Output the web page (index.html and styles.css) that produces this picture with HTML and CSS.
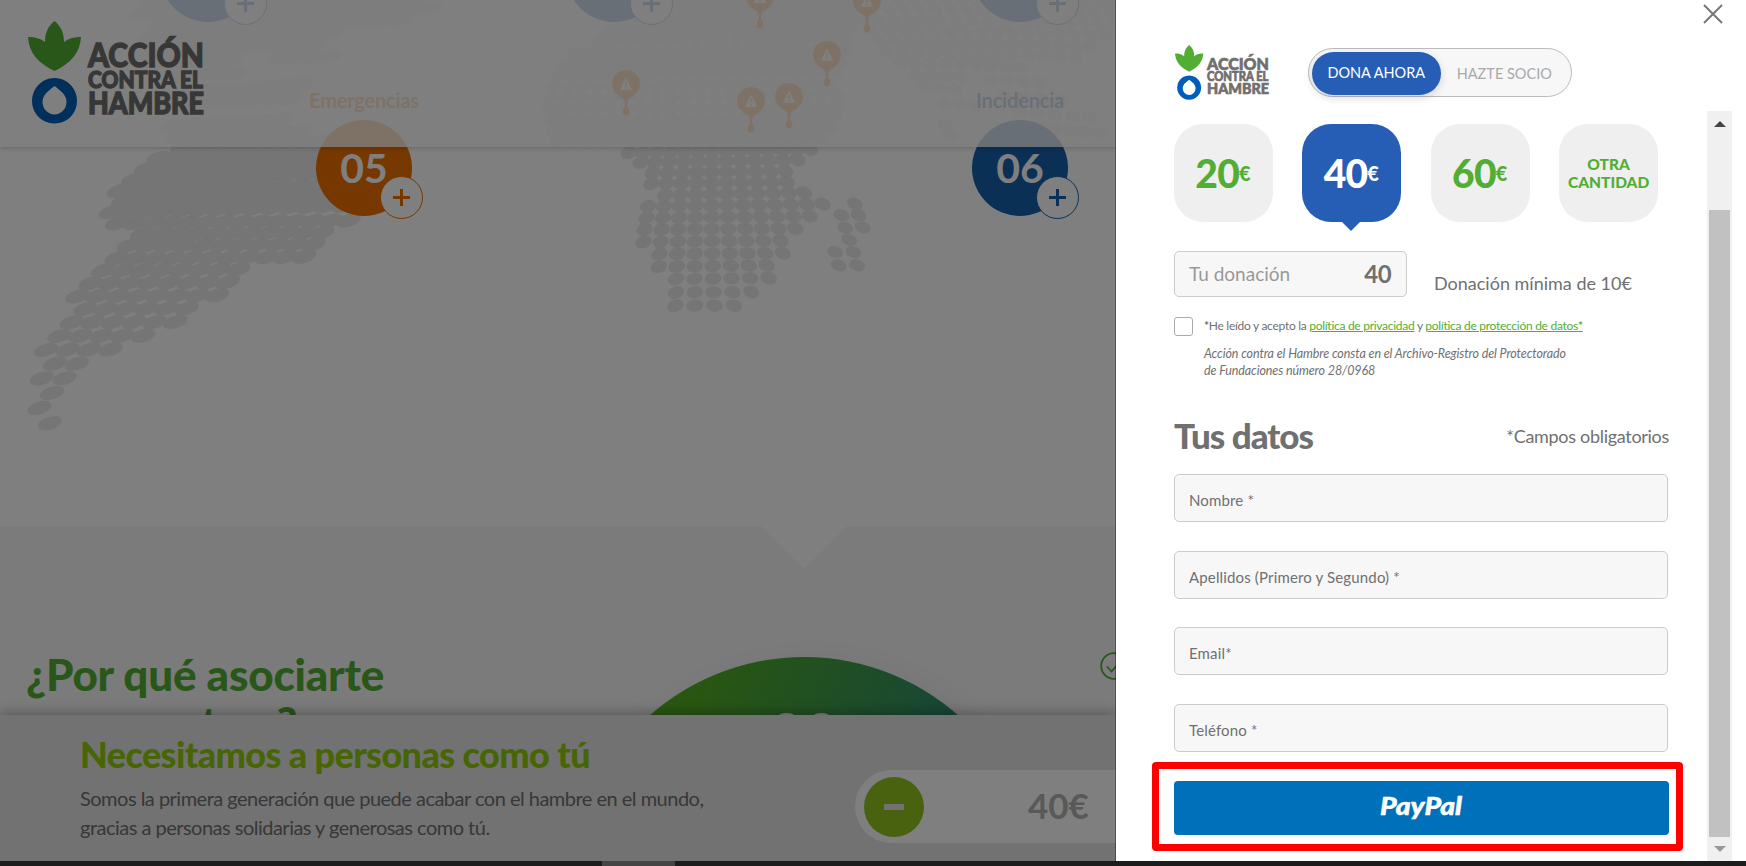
FILE: index.html
```html
<!DOCTYPE html>
<html lang="es">
<head>
<meta charset="utf-8">
<title>Acción contra el Hambre</title>
<link rel="stylesheet" href="styles.css">
</head>
<body>
<svg class="defs" width="0" height="0" aria-hidden="true">
  <symbol id="logo" viewBox="0 0 176 103" overflow="visible">
    <path fill="#52ae32" d="M26.500 50C10 42 1 32 0 16C6 16 12 17 17 21C17 12 20 5 26.500 0C33 5 36 12 36 21C41 17 47 16 53 16C52 32 43 42 26.500 50Z"/>
    <path fill="#005eb8" fill-rule="evenodd" d="M26.500 57a22.500 22.800 0 1 0 .01 0ZM26.500 65C33 70 38.500 74 38.500 81a12 12.500 0 0 1-24 0C14.500 74 20 70 26.500 65Z"/>
    <g class="logo-text">
      <text x="60" y="46" font-size="32" textLength="116" lengthAdjust="spacingAndGlyphs">ACCIÓN</text>
      <text x="60" y="66.500" font-size="23" textLength="115" lengthAdjust="spacingAndGlyphs">CONTRA EL</text>
      <text x="60" y="92.500" font-size="29.500" textLength="116" lengthAdjust="spacingAndGlyphs">HAMBRE</text>
    </g>
  </symbol>
  <symbol id="pin" viewBox="0 0 28 46">
    <path fill="#ef7d00" d="M14 0a14 14 0 0 1 14 14C28 21 22 26 17 28.500C15.500 30 15 33 15 36C16.500 38 17.500 40 17.500 42a3.500 3.500 0 0 1-7 0C10.500 40 11.500 38 13 36C13 33 12.500 30 11 28.500C6 26 0 21 0 14A14 14 0 0 1 14 0Z"/>
    <path fill="#fff" stroke="#fff" stroke-width="1.500" stroke-linejoin="round" d="M14 9l5 10h-10Z"/>
    <path stroke="#ef7d00" stroke-width="1.600" d="M14 11.500v4.500M14 17v1.400"/>
  </symbol>
</svg>

<main class="stage">
  <div class="page">
    <section class="map">
      <svg class="dots" id="dots" width="1116" height="526"></svg>
      <svg class="pin" style="left:612px;top:70px"><use href="#pin"/></svg>
      <svg class="pin" style="left:737px;top:87px"><use href="#pin"/></svg>
      <svg class="pin" style="left:775px;top:83px"><use href="#pin"/></svg>
      <svg class="pin" style="left:813px;top:41px"><use href="#pin"/></svg>
      <svg class="pin" style="left:746px;top:-17px"><use href="#pin"/></svg>
      <svg class="pin" style="left:853px;top:-13px"><use href="#pin"/></svg>
      <div class="spot" style="left:160px;top:-74px"><i class="plus"></i></div>
      <div class="spot" style="left:566px;top:-74px"><i class="plus"></i></div>
      <div class="spot" style="left:972px;top:-74px"><i class="plus"></i></div>
      <div class="spot orange" style="left:316px;top:120px"><span class="label">Emergencias</span>05<i class="plus"></i></div>
      <div class="spot" style="left:972px;top:120px"><span class="label">Incidencia</span>06<i class="plus"></i></div>
    </section>
    <section class="why">
      <svg class="notch" width="86" height="43"><path d="M0 0h86L43 43Z" fill="#fff"/></svg>
      <h2 class="why-title">¿Por qué asociarte<br>con nosotros?</h2>
      <div class="ball">00</div>
      <svg class="check" width="28" height="28" viewBox="0 0 28 28" fill="none" stroke="#52ae32" stroke-width="1.800"><circle cx="14" cy="14" r="12.800"/><path d="M7 14.500l4.500 5L20 10"/></svg>
    </section>
    <header class="topbar"><svg class="logo-big"><use href="#logo"/></svg></header>
    <aside class="cta">
      <div class="cta-copy">
        <h3 class="cta-title">Necesitamos a personas como tú</h3>
        <p class="cta-text">Somos la primera generación que puede acabar con el hambre en el mundo,<br>gracias a personas solidarias y generosas como tú.</p>
      </div>
      <div class="stepper"><span class="minus"></span><span class="stepper-value">40€</span></div>
    </aside>
  </div>

  <div class="panel">
    <svg class="close" width="20" height="20" viewBox="0 0 20 20"><path d="M1 1l18 18M19 1L1 19" stroke="#777" stroke-width="2"/></svg>
    <div class="panel-head">
      <svg class="logo-small"><use href="#logo"/></svg>
      <div class="toggle"><span class="on">DONA AHORA</span><span class="off">HAZTE SOCIO</span></div>
    </div>
    <div class="panel-body">
      <form class="form">
        <div class="amounts">
          <div class="amount">20<small>€</small></div>
          <div class="amount selected">40<small>€</small></div>
          <div class="amount">60<small>€</small></div>
          <div class="amount other">OTRA<br>CANTIDAD</div>
        </div>
        <div class="donation">
          <div class="donation-input"><span>Tu donación</span><b>40</b></div>
          <span class="minimum">Donación mínima de 10€</span>
        </div>
        <div class="consent">
          <span class="box"></span>
          <span class="consent-text"><b>*</b>He leído y acepto la <a>política de privacidad</a> y <a>política de protección de datos<b>*</b></a></span>
        </div>
        <p class="note">Acción contra el Hambre consta en el Archivo-Registro del Protectorado<br>de Fundaciones número 28/0968</p>
        <div class="data-head"><h1 class="data-title">Tus datos</h1><span class="required">*Campos obligatorios</span></div>
        <div class="fields">
          <div class="field">Nombre *</div>
          <div class="field">Apellidos (Primero y Segundo) *</div>
          <div class="field">Email*</div>
          <div class="field">Teléfono *</div>
        </div>
        <div class="paypal">
          <svg width="90" height="34"><text class="paypal-text" x="3" y="24" textLength="82" lengthAdjust="spacingAndGlyphs">PayPal</text></svg>
          <div class="highlight"></div>
        </div>
      </form>
      <div class="scrollbar">
        <svg class="up" width="12" height="6"><path d="M6 0l6 6H0Z" fill="#444"/></svg>
        <div class="thumb"></div>
        <svg class="down" width="12" height="6"><path d="M0 0h12L6 6Z" fill="#999"/></svg>
      </div>
    </div>
  </div>
</main>
<footer class="taskbar"><div class="task"></div></footer>
<script src="map.js"></script>
</body>
</html>
```

FILE: styles.css
```css
* { box-sizing: border-box; }
body { margin: 0; width: 1746px; height: 866px; overflow: hidden; background: #1c1c1c; font-family: Lato, "Liberation Sans", sans-serif; color: #707070; }
h1, h2, h3, p { margin: 0; }
.defs { position: absolute; }
.stage { display: flex; height: 861px; background: #fff; }
.logo-text { font-family: Lato, sans-serif; font-weight: 900; fill: #706f6f; stroke: #706f6f; stroke-width: 1.300; }

/* Dimmed page */
.page { position: relative; width: 1116px; height: 861px; overflow: hidden; background: #fff; flex: none; }
.page::after { content: ""; position: absolute; inset: 0; background: rgba(0, 0, 0, .5); border-right: 1px solid rgba(0, 0, 0, .35); }
.map { position: relative; height: 526px; }
.dots { position: absolute; left: 0; top: 0; }
.pin { position: absolute; width: 28px; height: 46px; }
.spot { position: absolute; width: 96px; height: 96px; border-radius: 50%; background: #1760ab; color: #fff; font-size: 41px; font-weight: 700; line-height: 95px; text-align: center; --c: #1760ab; }
.spot.orange { background: #ef7000; --c: #ef7000; }
.label { position: absolute; left: -50px; right: -50px; top: -32px; font-size: 20px; line-height: 24px; letter-spacing: -.2px; color: var(--c); }
.plus { position: absolute; left: 64px; top: 56px; width: 43px; height: 43px; border-radius: 50%; border: 1px solid var(--c); background: linear-gradient(var(--c), var(--c)) center / 17px 3px no-repeat, linear-gradient(var(--c), var(--c)) center / 3px 17px no-repeat, #fff; }
.topbar { position: absolute; left: 0; right: 0; top: 0; height: 147px; padding: 21px 28px; background: rgba(255, 255, 255, .8); box-shadow: 0 1px 5px rgba(0, 0, 0, .2); }
.logo-big, .logo-small { overflow: visible; }
.logo-big { display: block; width: 176px; height: 103px; }
.why { position: relative; height: 335px; background: #f7f7f7; padding: 124px 26px; }
.notch { position: absolute; left: 761px; top: 0; }
.why-title { font-size: 44px; font-weight: 900; line-height: 48px; letter-spacing: -.2px; color: #52ae32; }
.ball { position: absolute; left: 571px; top: 131px; width: 466px; height: 466px; border-radius: 50%; background: linear-gradient(115deg, #52ae22 20%, #2a8a78 65%, #2560b4); color: #fff; font-size: 60px; font-weight: 700; line-height: 60px; padding-top: 46px; text-align: center; box-shadow: 10px 10px 40px rgba(0, 0, 0, .08); }
.check { position: absolute; left: 1100px; top: 126px; }
.cta { position: absolute; left: 0; right: 0; top: 715px; height: 146px; background: #e4e4e4; box-shadow: 0 -2px 12px rgba(0, 0, 0, .3); padding-left: 80px; display: flex; }
.cta-copy { width: 775px; flex: none; padding-top: 17px; }
.cta-title { font-size: 36px; font-weight: 900; line-height: 44px; letter-spacing: -.6px; color: #8fcb0b; }
.cta-text { margin-top: 8px; font-size: 20px; line-height: 29px; letter-spacing: -.51px; white-space: nowrap; color: #707070; }
.stepper { flex: none; width: 360px; height: 73px; margin-top: 55px; border-radius: 37px; background: #fff; padding: 7px 9px; display: flex; align-items: center; }
.minus { width: 60px; height: 60px; border-radius: 50%; background: linear-gradient(#e4e4e4, #e4e4e4) center / 20px 6px no-repeat, #93c41f; }
.stepper-value { margin: -3px 0 0 104px; font-size: 35px; font-weight: 700; color: #b2b2b2; }

/* Donation panel */
.panel { position: relative; width: 630px; height: 861px; background: #fff; }
.close { position: absolute; left: 587px; top: 4px; }
.panel-head { height: 111px; padding: 45px 0 0 59px; display: flex; align-items: flex-start; gap: 39px; }
.logo-small { width: 94px; height: 55px; }
.toggle { width: 264px; height: 49px; margin-top: 3px; border: 1px solid #bbb; border-radius: 25px; background: #f7f7f7; padding: 3px; display: flex; font-size: 14.500px; line-height: 43px; text-align: center; }
.toggle .on { height: 43px; width: 129px; border-radius: 22px; background: #265eb6; color: #fff; box-shadow: 0 3px 8px rgba(0, 0, 0, .15); line-height: 42px; }
.toggle .off { width: 128px; color: #aaa; }
.panel-body { height: 750px; padding: 0 14px 0 58px; display: flex; justify-content: space-between; }
.form { width: 495px; padding-top: 13px; }
.amounts { display: flex; gap: 29.500px; }
.amount { position: relative; width: 98.900px; height: 98px; border-radius: 29px; background: #efefef; color: #52ae32; display: flex; align-items: center; justify-content: center; padding: 0 1px 1px 0; font-size: 39px; font-weight: 900; letter-spacing: -.8px; }
.amount small { font-size: 20px; letter-spacing: 0; }
.amount.selected { background: #265eb6; color: #fff; }
.amount.selected::after { content: ""; position: absolute; left: 39px; top: 97px; border: 10px solid transparent; border-top-color: #265eb6; border-bottom: 0; }
.amount.other { padding: 0; font-size: 15.500px; line-height: 18px; letter-spacing: 0; text-align: center; }
.donation { margin-top: 29px; display: flex; }
.donation-input { width: 233px; height: 46px; border: 1px solid #ccc; border-radius: 5px; background: #f7f7f7; padding: 0 15px 1px 14px; display: flex; align-items: center; justify-content: space-between; font-size: 19px; color: #999; }
.donation-input b { font-size: 24px; letter-spacing: -.6px; color: #707070; }
.minimum { margin-left: 27px; padding-top: 21px; font-size: 18px; line-height: 22px; }
.consent { margin-top: 20px; height: 18px; display: flex; gap: 11px; }
.box { width: 19px; height: 19px; border: 1px solid #aaa; border-radius: 3px; }
.consent-text { font-size: 12px; line-height: 17px; letter-spacing: -.28px; }
.consent-text a { color: #52ae32; text-decoration: underline; }
.note { margin: 10px 0 0 30px; font-size: 12.500px; line-height: 17px; font-style: italic; letter-spacing: -.1px; white-space: nowrap; }
.data-head { margin-top: 36px; height: 40px; display: flex; justify-content: space-between; }
.data-title { font-size: 35px; font-weight: 900; line-height: 40px; letter-spacing: -1px; }
.required { font-size: 18px; line-height: 42px; letter-spacing: -.3px; }
.fields { margin-top: 19px; display: flex; flex-direction: column; gap: 28.700px; }
.field { width: 494px; height: 48px; border: 1px solid #ccc; border-radius: 5px; background: #f7f7f7; padding: 2px 14px 0; font-size: 15px; letter-spacing: .15px; line-height: 46px; }
.paypal { position: relative; margin-top: 29px; height: 54px; border-radius: 4px; background: #0070ba; display: flex; align-items: center; justify-content: center; }
.paypal-text { font-family: Lato, sans-serif; font-size: 24px; font-weight: 900; font-style: italic; fill: #fff; stroke: #fff; stroke-width: .5; }
.highlight { position: absolute; left: -22px; right: -14px; top: -19px; bottom: -16px; border: 7px solid #f00; border-radius: 4px; }
.scrollbar { width: 25px; background: #f0f0f0; display: flex; flex-direction: column; align-items: center; }
.up { margin: 10px 0 83px; }
.thumb { width: 21px; height: 627px; background: #c1c1c1; }
.down { margin-top: 9px; }
.taskbar { height: 5px; background: #1c1c1c; }
.task { width: 73px; height: 5px; margin-left: 602px; background: #444; }
```

FILE: map.js
```js
// Each row: [x first, y first, x last, y last, dot count]
const regions = [
  { rx: 12.6, ry: 6.4, tilt: [-17, -17], rows: [
    [152, 3, 420, -3, 17], [140, 14, 430, 8, 18], [160, 26, 400, 20, 15], [150, 38, 330, 33, 12],
    [165, 50, 315, 45, 10], [170, 62, 230, 60, 5], [280, 58, 330, 56, 4], [180, 75, 235, 73, 4],
    [265, 86, 300, 84, 3], [190, 90, 300, 87, 7], [195, 102, 290, 99, 6], [172, 125, 280, 120, 7],
    [178, 136, 300, 131, 8], [182, 147, 322, 141, 9], [159, 158, 318, 152, 10], [146, 169, 322, 163, 11],
    [133, 180, 325, 174, 12], [119, 191, 335, 185, 13], [123, 202, 345, 195, 13], [111, 212, 343, 206, 14],
    [117, 223.3, 348.5, 220.5, 14], [142, 234.3, 322.5, 232.3, 11], [128.500, 246, 313.5, 244.3, 11],
    [116.4, 258.7, 304, 256.7, 11], [103.2, 270.7, 238.2, 269.3, 8], [90.4, 283.3, 227.8, 282, 8],
    [77.5, 296.3, 217, 295.3, 8], [85.4, 309, 186.8, 308.3, 6], [72, 322.3, 175.4, 322, 6],
    [59.6, 336, 143.2, 335.7, 5], [46, 350, 110.7, 349.3, 4], [55, 363.7, 76.8, 363.7, 2],
    [42, 378.3, 64.6, 378.3, 2], [52, 393, 52, 393, 1], [39.6, 408, 39.6, 408, 1], [50, 423.3, 50, 423.3, 1]
  ] },
  { rx: 8.4, ry: 6.2, tilt: [-20, 18], rows: [
    [630, -3, 840, -3, 17], [620, 8, 850, 6, 19], [615, 19, 855, 17, 19], [610, 30, 850, 28, 18],
    [600, 41, 845, 39, 19], [575, 53, 845, 50, 21], [566, 64, 840, 61, 21], [560, 75, 835, 72, 21],
    [555, 87, 830, 84, 20], [551, 98, 836, 95, 20], [550, 109, 837, 106, 20], [552, 120, 835, 117, 20],
    [554, 131, 830, 128, 19], [558, 141, 820, 138, 18],
    [628.8, 152.7, 810, 149.5, 14], [640.6, 162.3, 797.500, 160, 12], [652.8, 173, 785.3, 171, 10],
    [651.4, 183.7, 787, 182, 10], [665, 195, 804, 192.5, 10], [648, 206.3, 822.6, 204, 12],
    [646.5, 218, 809.7, 216, 11], [644.7, 229.7, 795.3, 228.3, 10], [643.6, 242, 780.5, 240.5, 9],
    [659.5, 254, 782.7, 253, 8], [658.8, 266.7, 766.8, 265.3, 7], [676, 279, 768.6, 278, 6],
    [676, 292.500, 751.2, 292, 5], [675.4, 305.7, 733.9, 305.7, 4]
  ] },
  { rx: 8.200, ry: 5.900, tilt: [20, 20], rows: [
    [854.8, 203.7, 854.8, 203.7, 1], [841.5, 215, 858.5, 215, 2], [845.2, 227.7, 862.6, 227.4, 2],
    [849.3, 239.7, 849.3, 239.7, 1], [835.2, 252, 853.4, 252, 2], [838.6, 265.3, 857, 265.3, 2],
    [850, -3, 1115, 2, 18], [856, 8, 1110, 13, 17], [862, 19, 1115, 24, 17], [872, 30, 1105, 35, 16],
    [880, 41, 1090, 46, 15], [887, 52, 1075, 57, 13], [900, 63, 1020, 67, 9], [915, 75, 960, 77, 4],
    [925, 87, 955, 89, 3], [990, 80, 1040, 83, 4], [945, 103, 975, 106, 3], [1005, 96, 1060, 100, 4],
    [1020, 112, 1090, 117, 5], [945, 125, 950, 127, 1], [1040, 128, 1100, 133, 5], [950, 136, 950, 136, 1]
  ] }
];
const svg = document.getElementById("dots");
let out = "";
for (const { rx, ry, tilt, rows } of regions) {
  for (const [x1, y1, x2, y2, n] of rows) {
    for (let i = 0; i < n; i++) {
      const t = n > 1 ? i / (n - 1) : 0;
      const x = x1 + (x2 - x1) * t, y = y1 + (y2 - y1) * t;
      const a = tilt[0] + (tilt[1] - tilt[0]) * t;
      out += `<ellipse cx="${x}" cy="${y}" rx="${rx}" ry="${ry}" transform="rotate(${a} ${x} ${y})"/>`;
    }
  }
}
svg.innerHTML = `<g fill="#ebebeb">${out}</g>`;
```
